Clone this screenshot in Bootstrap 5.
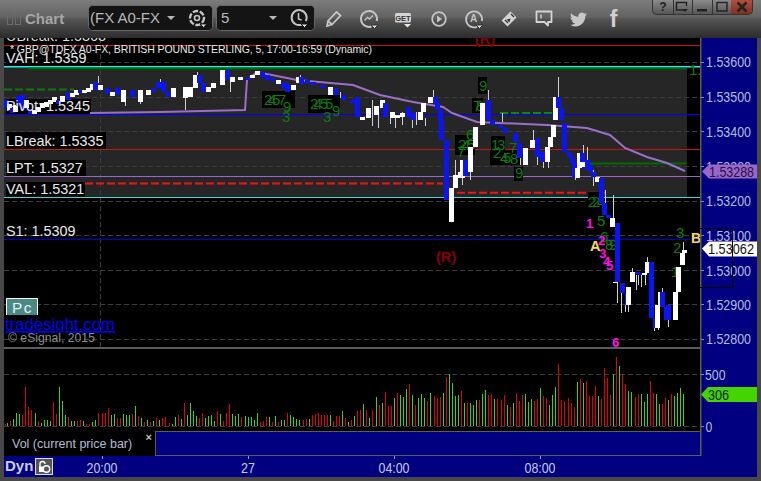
<!DOCTYPE html>
<html lang="en">
<head>
<meta charset="utf-8">
<title>Chart</title>
<link href="https://cdn.jsdelivr.net/npm/bootstrap@5.3.0/dist/css/bootstrap.min.css" rel="stylesheet">
<style>
html,body{margin:0;height:100%;background:#444;overflow:hidden}
body{font-family:"Liberation Sans",Arial,sans-serif}
.frame{width:761px;height:481px;background:#484848}
.titlebar{height:38px;background:linear-gradient(#7c7c7c 0,#636363 45%,#545454 50%,#2c2c2c 100%)}
.brand{width:88px;height:38px;padding:12px 0 0 7px;color:#a6a6a6;font-weight:700;font-size:15px;line-height:13px}
.brand i{display:inline-block;width:6px;height:13px;border:1px solid #6a6a6a;margin-right:2px;vertical-align:top}
.brand span{margin-left:2px}
.tb-group{height:26px;margin-top:5px;background:#141414;border:1px solid #666;border-radius:5px;overflow:hidden}
.g1{width:125px}.g2{width:99px;margin-left:3px;margin-right:1px}
.tb-btn{--bs-btn-padding-x:0;--bs-btn-padding-y:0;--bs-btn-color:#b8b8b8;--bs-btn-bg:#141414;--bs-btn-border-color:transparent;--bs-btn-font-size:15px;--bs-btn-border-radius:0;--bs-btn-border-width:0;--bs-btn-hover-color:#b8b8b8;--bs-btn-hover-bg:#141414;font-family:"Liberation Sans",Arial,sans-serif;text-align:left;line-height:24px;white-space:nowrap;overflow:hidden}
.btn-group>.tb-sel{flex:1 1 auto;position:relative;padding-left:4px;border-right:1px solid #5a5a5a}
.g1>.tb-sel{padding-left:1px}
.tb-sel b{position:absolute;right:6px;top:10px;border:4px solid transparent;border-top-color:#b8b8b8;border-bottom:0}
.btn-group>.tb-ico{width:31px;flex:0 0 31px;text-align:center}
.tb-ico svg,.slot svg{display:block;margin:auto}
.slot{width:35px;height:38px;display:flex;align-items:center;justify-content:center}
.fb{color:#d0d0d0;font-weight:700;font-size:23px;line-height:1}
.winbtns{height:15px;margin-right:8px;width:101px;border:1px solid #333;border-top:0;border-radius:0 0 5px 5px;overflow:hidden;background:linear-gradient(#8a8a8a,#565656)}
.wb{--bs-btn-padding-x:0;--bs-btn-padding-y:0;--bs-btn-border-width:0;--bs-btn-border-radius:0;--bs-btn-color:#222;--bs-btn-font-size:12px;--bs-btn-hover-color:#222;width:20px;height:14px;font-weight:700;line-height:14px;border-right:1px solid #333;display:flex;align-items:center;justify-content:center}
.wb:last-child{border-right:0;background:linear-gradient(#b05040,#803020)}
.body-wrap{padding:0 4px;height:418px}
.panes{width:696px}
.panes svg,.axis svg,.foot svg{display:block}
.sep{height:2px;background:#5c5c5c}
.legend{height:25px}
.legend-txt{width:151px;background:#000;color:#b4bcd0;font-size:12.5px;padding-left:8px;line-height:27px;position:relative}
.legend-x{position:absolute;right:3px;top:-7px;font-weight:700;font-size:11px;color:#c0c0c0}
.legend-rest{flex:1 1 auto;background:#000080;border:1px solid #5c5c5c;border-right:0}
.axis{width:57px;background:#000080}
.foot{height:21px;margin:0 4px;background:#000080}
.dyn{width:31px;padding-left:1px;font-weight:700;font-size:15px;color:#c8cfe0;line-height:20px}
.lock{width:18px;height:17px;margin-top:2px;background:#555;border:1px solid #ddd}
svg text{font-family:"Liberation Sans",Arial,sans-serif}
</style>
</head>
<body>
<div class="frame d-flex flex-column">
  <div class="titlebar d-flex align-items-start">
    <div class="brand"><i></i><i></i><span>Chart</span></div>
    <div class="btn-group tb-group g1">
      <button class="btn tb-btn tb-sel" type="button">(FX A0-FX<b></b></button>
      <button class="btn tb-btn tb-ico" type="button" aria-label="Studies"><svg width="24" height="24" viewBox="0 0 24 24" fill="none" stroke="#c4c4c4"><circle cx="12" cy="12" r="7" stroke-width="2.4" stroke-dasharray="5.5 1.6"/><circle cx="12" cy="12" r="2.5" stroke-width="1.6"/><path d="M15 18h7l-3.500 3.500z" fill="#e0e0e0" stroke="#141414"/></svg></button>
    </div>
    <div class="btn-group tb-group g2">
      <button class="btn tb-btn tb-sel" type="button">5<b></b></button>
      <button class="btn tb-btn tb-ico" type="button" aria-label="Time"><svg width="24" height="24" viewBox="0 0 24 24" fill="none" stroke="#c4c4c4"><path d="M15 18.500A7.500 7.500 0 1 1 18.800 15" stroke-width="2"/><path d="M11.500 7v6l3 1" stroke-width="1.500"/><path d="M14 18h7l-3.500 3.500z" fill="#e0e0e0" stroke="#141414"/></svg></button>
    </div>
    <div class="slot"><svg width="20" height="20" viewBox="0 0 20 20" fill="none" stroke="#c8c8c8" stroke-width="1.700"><path d="M3 17l1-5L12.500 3l4 3.500L8 15.500z"/><path d="M4 12l4 3.500"/></svg></div>
    <div class="slot"><svg width="22" height="22" viewBox="0 0 22 22" fill="none" stroke="#c4c4c4"><path d="M13.500 18.500A8 8 0 1 1 18.700 13" stroke-width="2"/><path d="M6.500 12.500l3-3 2 1.500 3.500-3.500" stroke-width="1.400"/><path d="M13 17h7l-3.500 3.500z" fill="#e0e0e0" stroke="#333"/></svg></div>
    <div class="slot"><svg width="20" height="22" viewBox="0 0 20 22"><rect x="1" y="5" width="16" height="9.500" rx="1.500" fill="#d4d4d4"/><text x="9" y="12.500" font-size="7.500" font-weight="700" text-anchor="middle" fill="#333">GET</text><path d="M10 16h7l-3.500 3.500z" fill="#e8e8e8"/></svg></div>
    <div class="slot"><svg width="18" height="18" viewBox="0 0 18 18" fill="none" stroke="#c4c4c4"><circle cx="9" cy="9" r="6.800" stroke-width="1.800"/><path d="M7 5.500v7l5-3.500z" fill="#c4c4c4" stroke="none"/></svg></div>
    <div class="slot"><svg width="22" height="22" viewBox="0 0 22 22" fill="none" stroke="#c4c4c4"><path d="M14 18.800A8 8 0 1 1 18.900 13" stroke-width="1.800"/><text x="10.500" y="14" font-size="10" font-weight="700" text-anchor="middle" fill="#c4c4c4" stroke="none">A</text><path d="M13 17h7l-3.500 3.500z" fill="#e0e0e0" stroke="#333"/></svg></div>
    <div class="slot"><svg width="18" height="18" viewBox="0 0 18 18"><path d="M10.500 1.500l6 6-9 9-6-6z" fill="#d4d4d4"/><path d="M11 4l3 3M5 10l3 3" stroke="#333" stroke-width="1.300"/><path d="M6.500 9.500l4-1-1 4z" fill="#333"/></svg></div>
    <div class="slot"><svg width="18" height="18" viewBox="0 0 18 18" fill="none" stroke="#d4d4d4" stroke-width="1.800"><path d="M1.500 1.500h15v10.500h-3.500v3.500l-3.500-3.500h-8z" stroke-linejoin="round"/><path d="M6 4.500v4" stroke-width="1.400"/></svg></div>
    <div class="slot"><svg width="17" height="17" viewBox="0 0 24 24"><path fill="#c8c8c8" d="M23.953 4.570a10 10 0 01-2.825.775 4.958 4.958 0 002.163-2.723c-.951.555-2.005.959-3.127 1.184a4.920 4.920 0 00-8.384 4.482C7.690 8.095 4.067 6.130 1.640 3.162a4.822 4.822 0 00-.666 2.475c0 1.710.870 3.213 2.188 4.096a4.904 4.904 0 01-2.228-.616v.060a4.923 4.923 0 003.946 4.827 4.996 4.996 0 01-2.212.085 4.936 4.936 0 004.604 3.417 9.867 9.867 0 01-6.102 2.105c-.390 0-.779-.023-1.170-.067a13.995 13.995 0 007.557 2.209c9.053 0 13.998-7.496 13.998-13.985 0-.210 0-.420-.015-.630A9.935 9.935 0 0024 4.590z"/></svg></div>
    <div class="slot"><span class="fb">f</span></div>
    <div class="btn-group winbtns ms-auto">
      <button class="btn wb" type="button">?</button>
      <button class="btn wb" type="button" aria-label="Layout"><svg width="14" height="12" viewBox="0 0 14 12" fill="none" stroke="#222" stroke-width="1.500"><path d="M9 9H1.500V1.500h10V5"/><path d="M7 8h6l-3 3z" fill="#222" stroke="none"/></svg></button>
      <button class="btn wb" type="button" aria-label="Minimize"><svg width="12" height="12" viewBox="0 0 12 12"><rect x="1" y="8" width="10" height="2.500" fill="#222"/></svg></button>
      <button class="btn wb" type="button" aria-label="Maximize"><svg width="14" height="12" viewBox="0 0 14 12" fill="none" stroke="#222" stroke-width="1.400"><rect x="2" y="1.500" width="10" height="8.500"/></svg></button>
      <button class="btn wb" type="button" aria-label="Close"><svg width="12" height="12" viewBox="0 0 12 12" stroke="#222" stroke-width="2.500"><path d="M1.500 1.500l9 9M10.500 1.500l-9 9"/></svg></button>
    </div>
  </div>
  <div class="body-wrap d-flex">
    <div class="panes d-flex flex-column">
      <svg id="chart" width="696" height="309" viewBox="4 38 696 309"></svg>
      <div class="sep"></div>
      <svg id="vol" width="696" height="82" viewBox="4 349 696 82"></svg>
      <div class="legend d-flex">
        <div class="legend-txt">Vol (current price bar)<span class="legend-x">×</span></div>
        <div class="legend-rest"></div>
      </div>
    </div>
    <div class="axis"><svg id="axis" width="57" height="418" viewBox="700 38 57 418"></svg></div>
  </div>
  <div class="foot d-flex">
    <div class="dyn">Dyn</div>
    <div class="lock"><svg width="16" height="15" viewBox="0 0 16 15" fill="none" stroke="#fff" stroke-width="1.400"><path d="M4 8V5a2.500 2.500 0 0 1 5 0"/><rect x="3" y="7.500" width="6" height="5.500" fill="#fff" stroke="none"/><circle cx="10.500" cy="10" r="3.200" fill="#555"/></svg></div>
    <svg id="times" width="704" height="21" viewBox="53 456 704 21"></svg>
  </div>
</div>
<script src="https://cdn.jsdelivr.net/npm/bootstrap@5.3.0/dist/js/bootstrap.bundle.min.js"></script>
<script>
(function(){
var s='';
function L(x1,y1,x2,y2,c,w,d){s+='<line x1="'+x1+'" y1="'+y1+'" x2="'+x2+'" y2="'+y2+'" stroke="'+c+'" stroke-width="'+(w||1)+'"'+(d?' stroke-dasharray="'+d+'"':'')+'/>';}
function R(x,y,w,h,c){s+='<rect x="'+x+'" y="'+y+'" width="'+w+'" height="'+h+'" fill="'+c+'"/>';}
function T(x,y,t,c,f,x2){s+='<text x="'+x+'" y="'+y+'" fill="'+c+'" font-size="'+f+'"'+(x2||'')+'>'+t+'</text>';}
function fit(w){return ' textLength="'+w+'" lengthAdjust="spacingAndGlyphs"';}
R(4,38,696,309,'#000');
R(4,67,683,130,'#262626');
R(687,67,13,130,'#000');
[62.5,97.5,131.5,166.5,201.5,235.5,270.5,304.5,339.5].forEach(function(y){L(4,y,700,y,'#3c3c3c',1,'5 3');});
L(100.500,38,100.500,347,'#3c3c3c',1,'5 3');
/* labels */
T(6,41,'UBreak: 1.5363','#ddd',14.4);
R(6,50,81,16,'#000');
T(6,63,'VAH: 1.5359','#e8e8e8',14.4);
R(6,99,85,15,'#000');
R(6,132,100,17,'#000');
T(6,146,'LBreak: 1.5335','#e8e8e8',14.4);
R(6,160,80,16,'#000');
T(6,173,'LPT: 1.5327','#e8e8e8',14.4);
R(6,182,79,15,'#000');
T(6,194,'VAL: 1.5321','#e8e8e8',14.4);
T(6,236,'S1: 1.5309','#e8e8e8',14.4);
L(4,45.500,700,45.500,'#d01010');
T(10,53,'* GBP@TDFX A0-FX, BRITISH POUND STERLING, 5, 17:00-16:59 (Dynamic)','#e8e8e8',10.500,' textLength="362"');
L(4,66.800,700,66.800,'#20f0f0',1.600);
L(28,68.500,686,68.500,'#006a00',2);
L(4,89.500,74,89.500,'#0a7a0a',2,'8 3');
L(500,113,556,113,'#0a8a0a',2,'8 3');
L(4,114.500,700,114.500,'#0000ff',1);
L(4,149.500,700,149.500,'#c81414');
L(590,163.500,686,163.500,'#006a00',2);
L(4,176.500,700,176.500,'#9966cc');
L(85,183.500,443,183.500,'#f01414',2,'8 3');
L(457,192.800,606,192.800,'#f01414',2,'8 3');
L(4,197.500,700,197.500,'#40d8d8');
L(4,239.500,690,239.500,'#0000e0');
/* VWAP */
s+='<polyline fill="none" stroke="#9a70c8" stroke-width="2" points="90,113 160,112 245,110 247,80 257,72 297,80 353,85 380,95 413,102 443,107 452,113 477,122 547,125 587,128 610,135 625,148 647,157 667,163 685,171"/>';
/* green count digits */
[[262,91,33,17],[308,95,32,18],[478,77,9,17],[472,98,11,15],[455,135,20,20],[491,136,14,15],[490,150,30,15],[514,167,9,14],[588,192,12,16]].forEach(function(b){R(b[0],b[1],b[2],b[3],'#000');});
var g='#0c7c0c';
[[264,105,'2'],[268,105,'4'],[272,105,'5'],[278,105,'7'],[283,112,'9'],[282,122,'3'],
 [310,109,'2'],[314,109,'4'],[320,109,'5'],[325,109,'5'],[332,116,'9'],[323,122,'3'],
 [479,91,'9'],[473,111,'7'],[476,111,'8'],[466,140,'6'],[458,150,'2'],[462,150,'4'],[467,150,'5'],[457,157,'7'],
 [491,150,'1'],[497,150,'3'],[509,153,'7'],[493,158,'2'],[500,163,'4'],[503,163,'5'],[510,164,'8'],[515,178,'9'],
 [588,207,'2'],[592,207,'2'],[597,207,'4'],[597,226,'5'],[600,242,'6'],[605,250,'8'],[609,250,'9'],
 [676,238,'3'],[673,253,'2'],[671,277,'1'],[689,75,'1.']].forEach(function(d){T(d[0],d[1],d[2],g,15);});
/* wicks */
var W=[[185,93,110],[98,76,83],[230,80,92],[197,72,75],[160,79,84],[451,200,222],[455,160,183],[462,175,185],[593,170,186],[613,195,226],[583,145,165],[587,147,165],[533,130,140],[537,153,165],[543,160,168],[558,77,97],[488,90,100],[502,113,122],[433,90,97],[617,283,303],[621,283,313],[625,305,312],[628,305,312],[632,268,272],[636,275,290],[638,275,285],[641,275,287],[645,273,285],[647,257,262],[654,328,331],[658,328,330],[662,288,292],[668,320,327],[683,242,250],
[372,100,126],[378,108,128],[390,115,124],[395,116,128],[402,112,125],[412,118,128],[416,112,125],[425,118,126],[470,170,180],[520,158,165],[548,160,168],[575,178,180],[605,190,203],[125,100,106],[140,100,104],[300,75,80],[340,92,98]];
W.forEach(function(w){L(w[0]+.5,w[1],w[0]+.5,w[2],'#cfcfcf');});
/* bodies: colour, x, top, bottom */
var B=('b6,100,108 w9,104,110 b12,108,113 w15,105,112 b18,96,106 b22,95,110 w26,100,108 b30,109,114 w34,110,114 w38,107,112 w42,103,108 w46,102,107 w50,100,104 w54,97,102 b58,100,104 w62,96,101 b68,92,100 w72,93,97 w76,90,95 b80,90,93 w84,90,93 w88,88,92 w92,84,90 b95,82,90 w100,85,90 b107,88,94 w112,92,96 b117,88,95 w123,90,102 b132,90,97 w140,90,102 w148,90,95 b153,88,92 b158,82,88 b163,82,92 b168,92,97 w173,88,97 w185,87,98 w190,87,97 w195,75,88 b199,75,83 b203,83,92 w208,87,92 w213,83,88 w222,70,85 b227,70,80 w232,77,82 w240,77,80 b248,77,80 w252,75,78 w257,71,75 b262,72,77 b267,75,80 b273,78,81 w278,80,84 b283,82,88 b287,84,92 w293,85,90 w298,77,83 b301,77,84 b307,80,83 b313,82,85 b322,85,88 w330,87,95 b335,88,95 b343,95,100 b352,100,103 b357,97,117 w362,117,120 w368,108,118 w376,106,115 w382,100,108 b385,103,117 w392,112,118 w397,115,118 w402,113,117 b408,107,117 b413,113,120 w420,112,120 w423,103,112 w430,97,103 b435,97,103 b437,103,110 b440,110,120 b441,120,140 b446,140,200 w451,188,222 w455,175,188 w460,172,178 w462,160,178 b465,160,176 w470,147,172 w475,127,147 w482,103,125 b488,100,120 b492,120,125 b500,125,128 b505,128,133 b515,133,142 b519,143,158 w525,148,165 w532,140,148 b537,138,157 b542,152,162 w547,147,162 w550,137,147 w553,125,137 w555,97,120 b558,97,108 b561,108,120 b564,123,152 b569,152,157 b572,157,163 b574,162,178 w577,168,178 w579,153,168 b582,153,162 w584,162,167 b587,160,170 b590,165,172 b593,172,177 w597,177,182 b601,178,203 b604,203,215 b608,215,218 w612,218,227 b617,223,282 w615,282,283 b622,283,293 b627,293,305 w628,287,305 w632,272,282 b637,272,274 b641,273,275 w644,273,275 w647,262,273 b651,262,318 b655,318,328 w657,305,328 w660,292,305 b662,292,307 b666,307,320 b668,305,320 w675,292,320 w678,267,292 w682,253,265 w684,250,253').split(' ');
B.forEach(function(b){var c=b[0]=='w'?'#fff':'#0a14f5',p=b.slice(1).split(',');R(+p[0]-2,+p[1],5,p[2]-p[1],c);});
T(6,111,'Pivot: 1.5345','#e8e8e8',14.4);
/* pattern strip */
R(6,298,32,17,'#4a8a85');
s+='<path d="M6.500 315V298.500H37.500V315" fill="none" stroke="#fff"/>';
T(12,313,'Pc','#eef',15.500,' letter-spacing="1.500"');
T(5,330,'tradesight.com','#0000ff',16.800,' text-decoration="underline"');
T(8,342,'© eSignal, 2015','#8c8c8c',12.200);
/* annotations */
var r='#8a0000';
T(475,44,'(R)',r,14.500,' font-weight="700"');
T(436,262,'(R)',r,14.500,' font-weight="700"');
var m='#ff10e8';
[[586,228,'1'],[598,245,'2'],[599,258,'3'],[603,266,'4'],[606,270,'5'],[612,346.500,'6']].forEach(function(d){T(d[0],d[1],d[2],m,13.500,' font-weight="700"');});
T(590,251,'A','#f6d860',14.500,' font-weight="700"');
T(691,243,'B','#f6d860',14,' font-weight="700"');
document.getElementById('chart').innerHTML=s;

/* volume */
s='';
R(4,349,696,82,'#000');
L(4,374.500,700,374.500,'#3c3c3c',1,'5 3');
L(4,426.500,700,426.500,'#3c3c3c',1,'5 3');
var v1='15r2 22g3 31r5 40g7 49g13 58g12 67r11 76r39 85r19 94r16 106g13 115r5 124g3 133g6 142g6 151g5 160r24 169r12 178g39 187g25 196g11 205r9 214g5 223g5 232r5 241r6 250g5 259r2 268r2 277g4 286g6 295r13 307r13 316r13 325r18 334g11 343g12 352r8 361r8 370g12 379g11 388g11 397r12 406g20 415r10 424g8 433r4 442g6 451r4 460g5 469r8 478g6 487r8 496r9 508r3 517g2 526g9 535r11 544g7 553r23 562g11 571g23 580g15 589g10 598r8 607r13 616g8 625g10 634g11 643g5 652r15 661g12 670r5 679r13 688r22 697g12 706g10 715g12 724r9 736g10 745g9 754g9 763g6 772g13 781r4 790r5 799r9 808g9 817r4 826g10 835r4 844g6 853g6 862r13 871g11 880g9 889g7 898g6 910r6 919r7 928g7 937r11 946r12 955r13 964r11 973r11 982r11 991g11 1000r5 1009r10 1018r10 1027g15 1036r8 1045g4 1054r6 1063g10 1072r15 1081r16 1090g22 1099r16 1108g8 1117r16 1129g29 1138r21';
var v2='7g23 16r34 25r20 34r20 43g28 52r33 61g31 70g29 79g37 88r42 97g31 106r21 115g28 124g32 133g28 142r25 151g33 163r30 172r28 181r29 190g33 199r49 208g52 217g43 226g30 235g31 244r35 253g23 262r23 271g23 280g21 289g26 298r26 307g32 316g36 325r31 334r32 343g27 352r27 364r26 373r31 382g21 391r19 400g23 409r33 418r25 427r31 436g32 445g24 454g27 463r25 472r27 481g38 490r30 499r28 508g21 517g31 526g39 535r62 544r26 553r25 565r28 574r23 583r19 592g44 601r47 610g43 619r45 628r30 637r30 646r40 655g30 664r27 673r58 682r48 691r31 700g52 709r69 718g60 727r52 736r42 745g35 754g34 766r29 775r32 784g32 793g24 802g32 811r45 820r33 829g32 838g22 847r22 856r28 865g26 874r32 883g30 892g33 901g38 910g32';
function vol(str,off){str.split(' ').forEach(function(b){var m=b.match(/(\d+)([rg])(\d+)/),x=Math.floor(off+m[1]/3);R(x,426-m[3],1,+m[3],m[2]=='g'?'#44d400':'#e60000');});}
vol(v1,0);vol(v2,380);
document.getElementById('vol').innerHTML=s;

/* axis */
s='';
L(700.500,38,700.500,456,'#5c5c5c',2);
var ac='#b4bcdc';
[[62,'1.53600'],[97,'1.53500'],[131.500,'1.53400'],[166.500,'1.53300'],[201,'1.53200'],[235.500,'1.53100'],[270.500,'1.53000'],[304.500,'1.52900'],[339,'1.52800']].forEach(function(a){
  L(701,Math.floor(a[0])+.5,704,Math.floor(a[0])+.5,'#8a8a8a');
  T(706,a[0]+5,a[1],ac,14,fit(45));
});
s+='<path d="M702 171.500l7-7h48v14h-48z" fill="#9966cc"/>';
T(709,176.500,'1.53288','#2a1040',14,fit(45));
s+='<path d="M702 248.500l7-7h48v15h-48z" fill="#fff"/>';
T(708,253.500,'1.53062','#111',14,fit(46));
s+='<path d="M700 228.500H732.500V287.500H700" fill="none" stroke="#000"/>';
L(701,374.500,704,374.500,'#8a8a8a');
L(701,426.500,704,426.500,'#8a8a8a');
T(705,379.500,'500',ac,14,fit(20.500));
T(705.500,431.500,'0',ac,14,fit(6.800));
s+='<path d="M701 394.500l7-7.500h49v15h-49z" fill="#44d400"/>';
T(708,399.500,'306','#123',14,fit(21));
document.getElementById('axis').innerHTML=s;

/* time axis */
s='';
[[102,'20:00',31],[248,'27',14],[394,'04:00',31],[540,'08:00',31]].forEach(function(a){
  L(a[0]+.5,456,a[0]+.5,459,'#9a9a9a');
  T(a[0]-a[2]/2,473,a[1],'#c4cbe4',14,fit(a[2]));
});
document.getElementById('times').innerHTML=s;
})();
</script>
</body>
</html>
